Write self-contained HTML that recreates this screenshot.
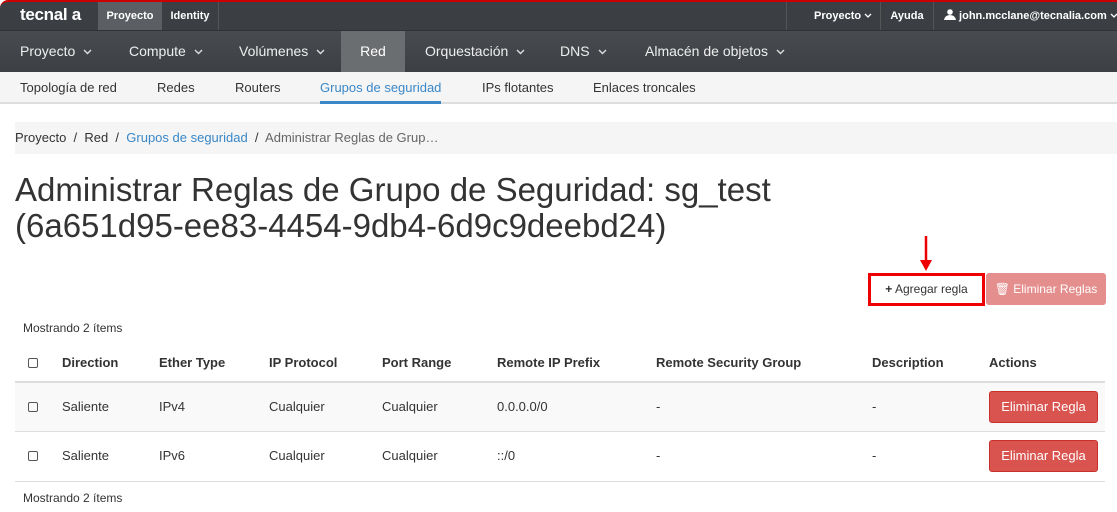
<!DOCTYPE html>
<html><head><meta charset="utf-8"><style>
*{box-sizing:border-box;margin:0;padding:0}
body{width:1117px;height:512px;overflow:hidden;font-family:"Liberation Sans",Arial,sans-serif;background:#fff;color:#333;position:relative}
.a{position:absolute;white-space:nowrap}
.top{position:absolute;left:0;top:0;width:1117px;height:30px;background:#3b3f44;border-top:2px solid #c00;border-radius:8px 0 0 0}
.top .a{font-weight:bold}
.nav{position:absolute;left:0;top:30px;width:1117px;height:42px;background:linear-gradient(#484c50,#3c4044);border-top:1px solid #2f3236}
.nav .a{color:#eee;font-size:14px;top:12px}
.sub{position:absolute;left:0;top:72px;width:1117px;height:32px;background:#f5f5f5;border-bottom:2px solid #ddd}
.sub .a{font-size:13px;color:#333;top:8px}
.ch{display:inline-block;margin-left:8px;vertical-align:middle}
.row{position:absolute;left:15px;width:1090px;font-size:13px}
.cb{position:absolute;left:28px;width:10px;height:10px;border:1px solid #555;border-radius:2px}
.t{font-size:13px}
.btnr{position:absolute;left:989px;width:109px;height:32px;background:#d9534f;border:1px solid #c9302c;border-radius:3px;color:#fff;font-size:13px;text-align:center;line-height:30px}
</style></head><body>
<div class="top">
 <div class="a" style="left:20px;top:3px;color:#fff;font-weight:bold;font-size:17px;letter-spacing:-0.3px">tecnal a</div>
 <div class="a" style="left:98px;top:0;width:64px;height:28px;background:#5b5f63;color:#fff;font-size:11px;line-height:28px;text-align:center">Proyecto</div>
 <div class="a" style="left:162px;top:0;width:57px;height:28px;border-right:1px solid #555;color:#fff;font-size:11px;line-height:28px;text-align:center">Identity</div>
 <div class="a" style="left:786px;top:0;height:28px;border-left:1px solid #555;padding-left:27px;padding-right:8px;color:#fff;font-size:11px;line-height:28px">Proyecto <svg width="8" height="6"><polyline points="1,1 4,4 7,1" fill="none" stroke="#fff" stroke-width="1.3"/></svg></div>
 <div class="a" style="left:880px;top:0;height:28px;border-left:1px solid #555;width:53px;color:#fff;font-size:11px;line-height:28px;text-align:center">Ayuda</div>
 <div class="a" style="left:933px;top:0;height:28px;border-left:1px solid #555;padding-left:10px;color:#fff;font-size:11px;line-height:28px"><svg width="12" height="11" style="vertical-align:-1px"><circle cx="6" cy="3" r="2.8" fill="#fff"/><path d="M0 11 Q1 6 6 6 Q11 6 12 11Z" fill="#fff"/></svg> john.mcclane@tecnalia.com <svg width="8" height="6"><polyline points="1,1 4,4 7,1" fill="none" stroke="#fff" stroke-width="1.3"/></svg></div>
</div>
<div class="nav">
 <div class="a" style="left:20px">Proyecto<svg class="ch" width="9" height="6"><polyline points="1,1 4.5,4.5 8,1" fill="none" stroke="#ddd" stroke-width="1.4"/></svg></div>
 <div class="a" style="left:129px">Compute<svg class="ch" width="9" height="6"><polyline points="1,1 4.5,4.5 8,1" fill="none" stroke="#ddd" stroke-width="1.4"/></svg></div>
 <div class="a" style="left:239px">Volúmenes<svg class="ch" width="9" height="6"><polyline points="1,1 4.5,4.5 8,1" fill="none" stroke="#ddd" stroke-width="1.4"/></svg></div>
 <div class="a" style="left:341px;top:0;width:64px;height:42px;background:#6b6e71;line-height:40px;text-align:center;color:#fff">Red</div>
 <div class="a" style="left:425px">Orquestación<svg class="ch" width="9" height="6"><polyline points="1,1 4.5,4.5 8,1" fill="none" stroke="#ddd" stroke-width="1.4"/></svg></div>
 <div class="a" style="left:560px">DNS<svg class="ch" width="9" height="6"><polyline points="1,1 4.5,4.5 8,1" fill="none" stroke="#ddd" stroke-width="1.4"/></svg></div>
 <div class="a" style="left:645px">Almacén de objetos<svg class="ch" width="9" height="6"><polyline points="1,1 4.5,4.5 8,1" fill="none" stroke="#ddd" stroke-width="1.4"/></svg></div>
</div>
<div class="sub">
 <div class="a" style="left:20px">Topología de red</div>
 <div class="a" style="left:157px">Redes</div>
 <div class="a" style="left:235px">Routers</div>
 <div class="a" style="left:320px;color:#3a87c8;height:24px;border-bottom:3px solid #3a87c8">Grupos de seguridad</div>
 <div class="a" style="left:482px">IPs flotantes</div>
 <div class="a" style="left:593px">Enlaces troncales</div>
</div>
<div class="a" style="left:15px;top:122px;width:1102px;height:32px;background:#f5f5f5;font-size:13px;line-height:31px">Proyecto&nbsp; /&nbsp; Red&nbsp; /&nbsp; <span style="color:#3a87c8">Grupos de seguridad</span>&nbsp; /&nbsp; <span style="color:#666">Administrar Reglas de Grup…</span></div>
<div class="a" style="left:15px;top:172px;font-size:33px;line-height:36px;color:#333;white-space:normal;width:1050px">Administrar Reglas de Grupo de Seguridad: sg_test<br>(6a651d95-ee83-4454-9db4-6d9c9deebd24)</div>
<svg class="a" style="left:919px;top:236px" width="14" height="36"><line x1="7" y1="0" x2="7" y2="28" stroke="#e00" stroke-width="2.5"/><path d="M1 24 L7 35 L13 24 Z" fill="#e00"/></svg>
<div class="a" style="left:868px;top:273px;width:117px;height:33px;border:3px solid #e00;background:#fff;font-size:12px;line-height:27px;text-align:center;color:#333"><b>+</b> Agregar regla</div>
<div class="a" style="left:986px;top:273px;width:120px;height:32px;background:#e48f8d;border-radius:3px;color:#fff;font-size:12px;line-height:32px;text-align:center">&#128465;&#xFE0E; Eliminar Reglas</div>
<div class="a" style="left:23px;top:321px;font-size:12px">Mostrando 2 ítems</div>
<div class="row" style="top:343px;height:40px;border-bottom:2px solid #ddd"></div>
<div class="cb" style="top:358px"></div>
<div class="a" style="top:355px;left:62px;font-size:13px;font-weight:bold">Direction</div>
<div class="a" style="top:355px;left:159px;font-size:13px;font-weight:bold">Ether Type</div>
<div class="a" style="top:355px;left:269px;font-size:13px;font-weight:bold">IP Protocol</div>
<div class="a" style="top:355px;left:382px;font-size:13px;font-weight:bold">Port Range</div>
<div class="a" style="top:355px;left:497px;font-size:13px;font-weight:bold">Remote IP Prefix</div>
<div class="a" style="top:355px;left:656px;font-size:13px;font-weight:bold">Remote Security Group</div>
<div class="a" style="top:355px;left:872px;font-size:13px;font-weight:bold">Description</div>
<div class="a" style="top:355px;left:989px;font-size:13px;font-weight:bold">Actions</div>
<div class="row" style="top:383px;height:49px;background:#f9f9f9;border-bottom:1px solid #ddd"></div>
<div class="cb" style="top:402px"></div>
<div class="a t" style="top:399px;left:62px">Saliente</div>
<div class="a t" style="top:399px;left:159px">IPv4</div>
<div class="a t" style="top:399px;left:269px">Cualquier</div>
<div class="a t" style="top:399px;left:382px">Cualquier</div>
<div class="a t" style="top:399px;left:497px">0.0.0.0/0</div>
<div class="a t" style="top:399px;left:656px">-</div>
<div class="a t" style="top:399px;left:872px">-</div>
<div class="btnr" style="top:391px">Eliminar Regla</div>
<div class="row" style="top:432px;height:50px;border-bottom:1px solid #ddd"></div>
<div class="cb" style="top:451px"></div>
<div class="a t" style="top:448px;left:62px">Saliente</div>
<div class="a t" style="top:448px;left:159px">IPv6</div>
<div class="a t" style="top:448px;left:269px">Cualquier</div>
<div class="a t" style="top:448px;left:382px">Cualquier</div>
<div class="a t" style="top:448px;left:497px">::/0</div>
<div class="a t" style="top:448px;left:656px">-</div>
<div class="a t" style="top:448px;left:872px">-</div>
<div class="btnr" style="top:440px">Eliminar Regla</div>
<div class="a" style="left:23px;top:491px;font-size:12px">Mostrando 2 ítems</div>
</body></html>
